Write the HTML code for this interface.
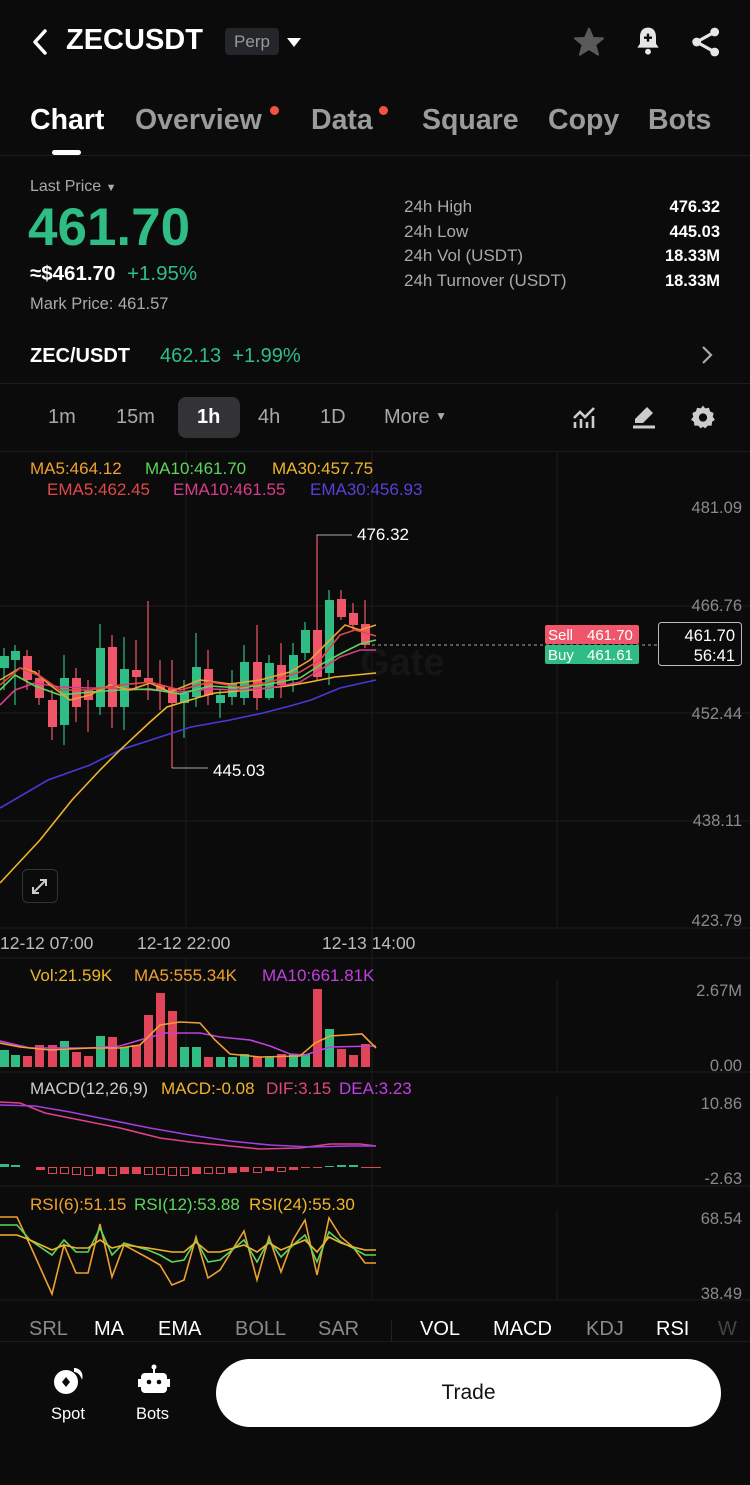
<!DOCTYPE html>
<html><head><meta charset="utf-8">
<style>
*{margin:0;padding:0;box-sizing:border-box}
body{width:750px;height:1485px;background:#0b0b0b;color:#fff;font-family:"Liberation Sans",sans-serif;position:relative;overflow:hidden}
.a{position:absolute;white-space:nowrap}
.g{color:#2fbd85}
.gr{color:#8a8a8a}
</style></head><body>
<!-- header -->
<svg class="a" style="left:30px;top:28px" width="20" height="28" viewBox="0 0 20 28"><path d="M15 3 L5 14 L15 25" stroke="#fff" stroke-width="3.5" fill="none" stroke-linecap="round" stroke-linejoin="round"/></svg>
<div class="a" style="left:66px;top:24px;font-size:29px;font-weight:bold">ZECUSDT</div>
<div class="a" style="left:225px;top:28px;width:54px;height:27px;background:#25262a;border-radius:4px;color:#9a9a9a;font-size:17px;line-height:27px;text-align:center">Perp</div>
<svg class="a" style="left:286px;top:36px" width="16" height="12"><path d="M1 2 L15 2 L8 11Z" fill="#fff"/></svg>
<svg class="a" style="left:572px;top:26px" width="34" height="32" viewBox="0 0 24 24"><path d="M12 2 L15 9 L22.5 9.3 L16.7 14 L18.8 21.5 L12 17.2 L5.2 21.5 L7.3 14 L1.5 9.3 L9 9Z" fill="#5a5a5d" stroke="#5a5a5d" stroke-linejoin="round" stroke-width="1.5"/></svg>
<svg class="a" style="left:632px;top:25px" width="32" height="32" viewBox="0 0 24 24"><path d="M12 2 C7.5 2 6 5.5 6 9 L6 14 L4 17 L20 17 L18 14 L18 9 C18 5.5 16.5 2 12 2Z" fill="#e6e6e6"/><circle cx="12" cy="20" r="2.2" fill="#e6e6e6"/><path d="M12 6.5 V12.5 M9 9.5 H15" stroke="#0b0b0b" stroke-width="1.8"/></svg>
<svg class="a" style="left:690px;top:26px" width="32" height="32" viewBox="0 0 24 24"><circle cx="18.5" cy="4.5" r="3.3" fill="#e6e6e6"/><circle cx="18.5" cy="19.5" r="3.3" fill="#e6e6e6"/><circle cx="5" cy="12" r="3.3" fill="#e6e6e6"/><path d="M18.5 4.5 L5 12 L18.5 19.5" stroke="#e6e6e6" stroke-width="2.4" fill="none"/></svg>
<!-- tabs -->
<div class="a" style="left:30px;top:104px;font-size:28.5px;font-weight:bold">Chart</div>
<div class="a" style="left:52px;top:150px;width:29px;height:5px;border-radius:3px;background:#fff"></div>
<div class="a" style="left:135px;top:104px;font-size:28.5px;font-weight:bold;color:#9b9b9b">Overview</div>
<div class="a" style="left:270px;top:106px;width:9px;height:9px;border-radius:5px;background:#f0533e"></div>
<div class="a" style="left:311px;top:104px;font-size:28.5px;font-weight:bold;color:#9b9b9b">Data</div>
<div class="a" style="left:379px;top:106px;width:9px;height:9px;border-radius:5px;background:#f0533e"></div>
<div class="a" style="left:422px;top:104px;font-size:28.5px;font-weight:bold;color:#9b9b9b">Square</div>
<div class="a" style="left:548px;top:104px;font-size:28.5px;font-weight:bold;color:#9b9b9b">Copy</div>
<div class="a" style="left:648px;top:104px;font-size:28.5px;font-weight:bold;color:#9b9b9b">Bots</div>
<div class="a" style="left:0;top:155px;width:750px;height:1px;background:#1c1c1e"></div>
<!-- price -->
<div class="a" style="left:30px;top:178px;font-size:16px;color:#aaa">Last Price <span style="font-size:11px">▼</span></div>
<div class="a g" style="left:28px;top:197px;font-size:53px;font-weight:bold">461.70</div>
<div class="a" style="left:30px;top:262px;font-size:20.5px;font-weight:bold">≈$461.70 <span class="g" style="margin-left:6px;font-weight:normal">+1.95%</span></div>
<div class="a" style="left:30px;top:295px;font-size:16.5px;color:#aaa">Mark Price: 461.57</div>
<div class="a" style="left:404px;top:195px;font-size:17px;color:#aaa;line-height:24.5px">24h High<br>24h Low<br>24h Vol (USDT)<br>24h Turnover (USDT)</div>
<div class="a" style="right:30px;top:195px;font-size:16.5px;line-height:24.5px;text-align:right;font-weight:bold">476.32<br>445.03<br>18.33M<br>18.33M</div>
<div class="a" style="left:30px;top:345px;font-size:20px;font-weight:bold">ZEC/USDT</div>
<div class="a g" style="left:160px;top:345px;font-size:20px">462.13 &nbsp;+1.99%</div>
<svg class="a" style="left:700px;top:345px" width="14" height="20"><path d="M3 2 L11 10 L3 18" stroke="#aaa" stroke-width="2.2" fill="none"/></svg>
<div class="a" style="left:0;top:383px;width:750px;height:1px;background:#1c1c1e"></div>
<!-- intervals -->
<div class="a" style="left:178px;top:397px;width:62px;height:41px;border-radius:8px;background:#333335"></div>
<div class="a" style="left:48px;top:406px;font-size:20px;color:#aaa">1m</div>
<div class="a" style="left:116px;top:406px;font-size:20px;color:#aaa">15m</div>
<div class="a" style="left:197px;top:406px;font-size:20px;font-weight:bold">1h</div>
<div class="a" style="left:258px;top:406px;font-size:20px;color:#aaa">4h</div>
<div class="a" style="left:320px;top:406px;font-size:20px;color:#aaa">1D</div>
<div class="a" style="left:384px;top:406px;font-size:20px;color:#aaa">More <span style="font-size:12px;vertical-align:3px">▼</span></div>
<svg class="a" style="left:572px;top:406px" width="26" height="24" viewBox="0 0 26 24"><path d="M2 12 L8 6 L13 11 L22 2" stroke="#ccc" stroke-width="2.6" fill="none"/><path d="M3 16V22M9 13V22M15 16V22M21 10V22" stroke="#ccc" stroke-width="2.6"/></svg>
<svg class="a" style="left:631px;top:405px" width="26" height="26" viewBox="0 0 26 26"><path d="M16 2 L22 8 L12 18 L4 18 L4 14Z" fill="#ccc"/><path d="M2 22H24" stroke="#ccc" stroke-width="3"/></svg>
<svg class="a" style="left:690px;top:404px" width="26" height="26" viewBox="0 0 24 24"><path d="M12 1.5 L14 4 L17.5 3.5 L18.5 6.8 L21.8 8.3 L21 11.8 L23 14.5 L20.3 16.5 L20 20 L16.5 20 L14 22.5 L12 21 L10 22.5 L7.5 20 L4 20 L3.7 16.5 L1 14.5 L3 11.8 L2.2 8.3 L5.5 6.8 L6.5 3.5 L10 4Z" fill="#ccc"/><circle cx="12" cy="12.5" r="3.8" fill="#0b0b0b"/></svg>
<div class="a" style="left:0;top:451px;width:750px;height:1px;background:#1c1c1e"></div>

<!-- chart svg -->
<svg class="a" style="left:0;top:0" width="750" height="1340" font-family="Liberation Sans, sans-serif">
<g stroke="#1d1d1f" stroke-width="1">
<line x1="186" y1="452" x2="186" y2="928"/><line x1="372" y1="452" x2="372" y2="1300"/><line x1="557" y1="452" x2="557" y2="928"/>
<line x1="186" y1="958" x2="186" y2="1072"/><line x1="557" y1="980" x2="557" y2="1072"/><line x1="557" y1="1095" x2="557" y2="1185"/><line x1="557" y1="1210" x2="557" y2="1300"/>
<line x1="0" y1="606" x2="750" y2="606"/><line x1="0" y1="713" x2="750" y2="713"/><line x1="0" y1="821" x2="750" y2="821"/><line x1="0" y1="928" x2="750" y2="928"/>
<line x1="0" y1="958" x2="750" y2="958"/><line x1="0" y1="1072" x2="750" y2="1072"/><line x1="0" y1="1186" x2="750" y2="1186"/><line x1="0" y1="1300" x2="750" y2="1300"/>
</g>
<text x="360" y="675" font-size="38" font-weight="bold" fill="#151515">Gate</text>
<g font-size="17">
<text x="30" y="474" fill="#f0a030">MA5:464.12</text><text x="145" y="474" fill="#5cd65c">MA10:461.70</text><text x="272" y="474" fill="#f0b429">MA30:457.75</text>
<text x="47" y="495" fill="#e04848">EMA5:462.45</text><text x="173" y="495" fill="#d83c8a">EMA10:461.55</text><text x="310" y="495" fill="#5a3fd8">EMA30:456.93</text>
</g>
<g font-size="16.5" fill="#8a8a8a" text-anchor="end">
<text x="742" y="513">481.09</text><text x="742" y="611">466.76</text><text x="742" y="719">452.44</text><text x="742" y="826">438.11</text><text x="742" y="926">423.79</text>
<text x="742" y="996">2.67M</text><text x="742" y="1071">0.00</text><text x="742" y="1109">10.86</text><text x="742" y="1184">-2.63</text><text x="742" y="1224">68.54</text><text x="742" y="1299">38.49</text>
</g>
<g font-size="17.5" fill="#bbb"><text x="0" y="949">12-12 07:00</text><text x="137" y="949">12-12 22:00</text><text x="322" y="949">12-13 14:00</text></g>
<!-- wicks -->
<g stroke-width="1.2">
<g stroke="#2fbd85"><line x1="4" y1="648" x2="4" y2="690"/><line x1="15" y1="645" x2="15" y2="705"/><line x1="64" y1="655" x2="64" y2="745"/><line x1="100" y1="624" x2="100" y2="715"/><line x1="124" y1="637" x2="124" y2="730"/><line x1="184" y1="680" x2="184" y2="738"/><line x1="196" y1="633" x2="196" y2="707"/><line x1="220" y1="690" x2="220" y2="718"/><line x1="232" y1="670" x2="232" y2="705"/><line x1="244" y1="645" x2="244" y2="705"/><line x1="269" y1="655" x2="269" y2="700"/><line x1="293" y1="643" x2="293" y2="692"/><line x1="305" y1="622" x2="305" y2="660"/><line x1="329" y1="590" x2="329" y2="685"/></g>
<g stroke="#f0566a"><line x1="27" y1="650" x2="27" y2="690"/><line x1="39" y1="670" x2="39" y2="705"/><line x1="52" y1="690" x2="52" y2="740"/><line x1="76" y1="668" x2="76" y2="722"/><line x1="88" y1="680" x2="88" y2="732"/><line x1="112" y1="635" x2="112" y2="728"/><line x1="136" y1="640" x2="136" y2="690"/><line x1="148" y1="601" x2="148" y2="700"/><line x1="160" y1="660" x2="160" y2="710"/><line x1="172" y1="660" x2="172" y2="768"/><line x1="208" y1="650" x2="208" y2="705"/><line x1="257" y1="625" x2="257" y2="710"/><line x1="281" y1="643" x2="281" y2="698"/><line x1="317" y1="535" x2="317" y2="680"/><line x1="341" y1="590" x2="341" y2="620"/><line x1="353" y1="603" x2="353" y2="630"/><line x1="365" y1="600" x2="365" y2="648"/></g>
</g>
<g fill="#2fbd85"><rect x="0" y="656" width="9" height="12"/><rect x="11" y="651" width="9" height="9"/><rect x="60" y="678" width="9" height="47"/><rect x="96" y="648" width="9" height="59"/><rect x="120" y="669" width="9" height="38"/><rect x="180" y="693" width="9" height="10"/><rect x="192" y="667" width="9" height="30"/><rect x="216" y="695" width="9" height="8"/><rect x="228" y="683" width="9" height="14"/><rect x="240" y="662" width="9" height="36"/><rect x="265" y="663" width="9" height="35"/><rect x="289" y="655" width="9" height="25"/><rect x="301" y="630" width="9" height="23"/><rect x="325" y="600" width="9" height="73"/></g>
<g fill="#f0566a"><rect x="23" y="656" width="9" height="24"/><rect x="35" y="678" width="9" height="20"/><rect x="48" y="700" width="9" height="27"/><rect x="72" y="678" width="9" height="29"/><rect x="84" y="690" width="9" height="10"/><rect x="108" y="647" width="9" height="60"/><rect x="132" y="670" width="9" height="7"/><rect x="144" y="678" width="9" height="5"/><rect x="156" y="685" width="9" height="5"/><rect x="168" y="688" width="9" height="15"/><rect x="204" y="669" width="9" height="26"/><rect x="253" y="662" width="9" height="36"/><rect x="277" y="665" width="9" height="20"/><rect x="313" y="630" width="9" height="47"/><rect x="337" y="599" width="9" height="18"/><rect x="349" y="613" width="9" height="12"/><rect x="361" y="624" width="9" height="21"/></g>
<g fill="none" stroke-width="1.6">
<polyline stroke="#4a38d8" points="0,808 48,780 90,765 120,750 160,737 191,727 230,720 263,713 290,706 311,700 340,688 376,680"/>
<polyline stroke="#f0b429" points="0,883 40,840 72,800 100,770 120,750 150,722 167,707 200,697 215,693 250,690 287,686 310,682 335,677 376,673"/>
<polyline stroke="#d83c8a" points="0,705 15,690 35,683 60,687 90,688 120,688 150,690 180,692 210,689 240,690 270,688 300,682 320,670 340,657 360,650 376,650"/>
<polyline stroke="#5cd65c" points="0,690 15,675 35,686 60,695 90,692 120,690 150,689 180,694 210,686 240,688 270,684 300,678 320,665 340,654 360,644 376,640"/>
<polyline stroke="#f0a030" points="0,680 20,668 35,672 50,685 70,700 90,695 110,685 130,690 150,683 170,692 200,680 230,684 260,680 290,672 310,660 330,640 345,625 360,630 376,625"/>
<polyline stroke="#e04848" points="0,685 20,668 40,676 60,690 90,690 120,685 150,682 180,690 210,682 240,687 270,682 300,672 320,660 340,635 355,630 376,636"/>
</g>
<line x1="372" y1="645" x2="660" y2="645" stroke="#aaa" stroke-width="1" stroke-dasharray="3,3"/>
<polyline points="317,536 317,535 352,535" fill="none" stroke="#aaa" stroke-width="1"/>
<text x="357" y="540" font-size="17" fill="#fff">476.32</text>
<polyline points="172,768 208,768" fill="none" stroke="#aaa" stroke-width="1"/>
<text x="213" y="776" font-size="17" fill="#fff">445.03</text>
<rect x="545" y="625" width="94" height="19" rx="2" fill="#f0566a"/><text x="548" y="640" font-size="15" fill="#fff">Sell</text><text x="587" y="640" font-size="15" fill="#fff">461.70</text>
<rect x="545" y="645" width="94" height="19" rx="2" fill="#2fbd85"/><text x="548" y="660" font-size="15" fill="#fff">Buy</text><text x="587" y="660" font-size="15" fill="#fff">461.61</text>
<rect x="658.5" y="622.5" width="83" height="43" rx="3" fill="#0b0b0b" stroke="#bbb"/>
<text x="735" y="641" font-size="16.5" fill="#fff" text-anchor="end">461.70</text><text x="735" y="661" font-size="16.5" fill="#fff" text-anchor="end">56:41</text>
<rect x="22.5" y="869.5" width="35" height="33" rx="5" fill="none" stroke="#333"/>
<path d="M33 893 L46 880 M40 880 H46 V886 M33 887 V893 H39" stroke="#ccc" stroke-width="2" fill="none"/>
<!-- vol -->
<g font-size="17"><text x="30" y="981" fill="#f0b429">Vol:21.59K</text><text x="134" y="981" fill="#f0a030">MA5:555.34K</text><text x="262" y="981" fill="#c040e0">MA10:661.81K</text></g>
<g>
<rect x="0" y="1050" width="9" height="17" fill="#2fbd85"/><rect x="11" y="1055" width="9" height="12" fill="#2fbd85"/><rect x="23" y="1056" width="9" height="11" fill="#e0455a"/><rect x="35" y="1045" width="9" height="22" fill="#e0455a"/><rect x="48" y="1045" width="9" height="22" fill="#e0455a"/><rect x="60" y="1041" width="9" height="26" fill="#2fbd85"/><rect x="72" y="1052" width="9" height="15" fill="#e0455a"/><rect x="84" y="1056" width="9" height="11" fill="#e0455a"/><rect x="96" y="1036" width="9" height="31" fill="#2fbd85"/><rect x="108" y="1037" width="9" height="30" fill="#e0455a"/><rect x="120" y="1047" width="9" height="20" fill="#2fbd85"/><rect x="132" y="1045" width="9" height="22" fill="#e0455a"/><rect x="144" y="1015" width="9" height="52" fill="#e0455a"/><rect x="156" y="993" width="9" height="74" fill="#e0455a"/><rect x="168" y="1011" width="9" height="56" fill="#e0455a"/><rect x="180" y="1047" width="9" height="20" fill="#2fbd85"/><rect x="192" y="1047" width="9" height="20" fill="#2fbd85"/><rect x="204" y="1057" width="9" height="10" fill="#e0455a"/><rect x="216" y="1057" width="9" height="10" fill="#2fbd85"/><rect x="228" y="1057" width="9" height="10" fill="#2fbd85"/><rect x="240" y="1054" width="9" height="13" fill="#2fbd85"/><rect x="253" y="1057" width="9" height="10" fill="#e0455a"/><rect x="265" y="1057" width="9" height="10" fill="#2fbd85"/><rect x="277" y="1054" width="9" height="13" fill="#e0455a"/><rect x="289" y="1054" width="9" height="13" fill="#2fbd85"/><rect x="301" y="1054" width="9" height="13" fill="#2fbd85"/><rect x="313" y="989" width="9" height="78" fill="#e0455a"/><rect x="325" y="1029" width="9" height="38" fill="#2fbd85"/><rect x="337" y="1049" width="9" height="18" fill="#e0455a"/><rect x="349" y="1055" width="9" height="12" fill="#e0455a"/><rect x="361" y="1044" width="9" height="23" fill="#e0455a"/>
</g>
<g fill="none" stroke-width="1.6">
<polyline stroke="#c040e0" points="0,1041 30,1048 60,1048 90,1048 120,1046 140,1040 165,1033 200,1033 220,1037 250,1040 270,1046 290,1054 305,1055 330,1047 376,1046"/>
<polyline stroke="#f0a030" points="0,1043 20,1047 50,1050 90,1048 120,1048 140,1045 160,1025 180,1022 200,1023 215,1040 230,1054 260,1057 300,1056 315,1043 330,1036 362,1034 376,1048"/>
</g>
<!-- macd -->
<g font-size="17"><text x="30" y="1094" fill="#ccc">MACD(12,26,9)</text><text x="161" y="1094" fill="#f0b429">MACD:-0.08</text><text x="266" y="1094" fill="#e04878">DIF:3.15</text><text x="339" y="1094" fill="#c040e0">DEA:3.23</text></g>
<g fill="none" stroke-width="1.6">
<polyline stroke="#e0408a" points="0,1102 20,1103 45,1113 80,1120 120,1128 160,1138 190,1142 230,1146 260,1149 300,1148 330,1144 360,1144 376,1146"/>
<polyline stroke="#a040e0" points="0,1105 35,1106 70,1112 110,1120 150,1128 190,1135 230,1141 270,1145 310,1147 350,1146 376,1146"/>
</g>
<g stroke-width="1"><rect x="0" y="1164" width="9" height="3" fill="#2fbd85"/><rect x="11" y="1165" width="9" height="2" fill="#2fbd85"/>
<g fill="none" stroke="#e0455a"><rect x="48.5" y="1167.5" width="8" height="6"/><rect x="60.5" y="1167.5" width="8" height="6"/><rect x="72.5" y="1167.5" width="8" height="7"/><rect x="84.5" y="1167.5" width="8" height="8"/><rect x="108.5" y="1167.5" width="8" height="8"/><rect x="144.5" y="1167.5" width="8" height="7"/><rect x="156.5" y="1167.5" width="8" height="7"/><rect x="168.5" y="1167.5" width="8" height="8"/><rect x="180.5" y="1167.5" width="8" height="8"/><rect x="204.5" y="1167.5" width="8" height="6"/><rect x="216.5" y="1167.5" width="8" height="6"/><rect x="253.5" y="1167.5" width="8" height="5"/><rect x="277.5" y="1167.5" width="8" height="4"/></g>
<g fill="#e0455a"><rect x="36" y="1167" width="9" height="3"/><rect x="96" y="1167" width="9" height="7"/><rect x="120" y="1167" width="9" height="7"/><rect x="132" y="1167" width="9" height="7"/><rect x="192" y="1167" width="9" height="7"/><rect x="228" y="1167" width="9" height="6"/><rect x="240" y="1167" width="9" height="5"/><rect x="265" y="1167" width="9" height="4"/><rect x="289" y="1167" width="9" height="3"/><rect x="301" y="1167" width="9" height="1"/><rect x="313" y="1167" width="9" height="1"/><rect x="361" y="1167" width="20" height="1"/></g>
<g fill="#2fbd85"><rect x="325" y="1166" width="9" height="1"/><rect x="337" y="1165" width="9" height="2"/><rect x="349" y="1165" width="9" height="2"/></g></g>
<!-- rsi -->
<g font-size="17"><text x="30" y="1210" fill="#f0a030">RSI(6):51.15</text><text x="134" y="1210" fill="#5cd65c">RSI(12):53.88</text><text x="249" y="1210" fill="#f0b429">RSI(24):55.30</text></g>
<g fill="none" stroke-width="1.6">
<polyline stroke="#f0a030" points="0,1217 17,1217 30,1245 52,1294 64,1245 76,1273 88,1273 100,1224 112,1277 124,1245 148,1258 160,1265 172,1285 184,1280 196,1237 208,1278 220,1270 244,1231 257,1280 269,1237 281,1272 293,1240 305,1220 317,1275 329,1218 341,1237 353,1247 365,1263 376,1263"/>
<polyline stroke="#5cd65c" points="0,1225 17,1225 30,1240 52,1255 64,1240 76,1252 88,1252 100,1228 112,1255 124,1243 148,1250 160,1255 172,1262 184,1260 196,1240 208,1262 220,1260 244,1240 257,1262 269,1240 281,1257 293,1245 305,1235 317,1262 329,1232 341,1242 353,1248 365,1255 376,1255"/>
<polyline stroke="#f0b429" points="0,1235 17,1235 30,1240 52,1250 64,1245 76,1248 88,1248 100,1240 112,1248 124,1245 148,1248 160,1250 172,1252 184,1252 196,1242 208,1252 220,1252 244,1245 257,1252 269,1243 281,1250 293,1245 305,1240 317,1252 329,1237 341,1243 353,1247 365,1250 376,1250"/>
</g>
</svg>
<!-- indicator tabs -->
<div class="a" style="left:0;top:1318px;font-size:20px;width:750px">
<span class="a" style="left:29px;color:#8a8a8a">SRL</span><span class="a" style="left:94px">MA</span><span class="a" style="left:158px">EMA</span><span class="a" style="left:235px;color:#8a8a8a">BOLL</span><span class="a" style="left:318px;color:#8a8a8a">SAR</span><span class="a" style="left:420px">VOL</span><span class="a" style="left:493px">MACD</span><span class="a" style="left:586px;color:#8a8a8a">KDJ</span><span class="a" style="left:656px">RSI</span><span class="a" style="left:718px;color:#444">W</span></div>
<div class="a" style="left:391px;top:1320px;width:1px;height:22px;background:#222"></div>
<div class="a" style="left:0;top:1341px;width:750px;height:1px;background:#1c1c1e"></div>
<!-- bottom -->
<svg class="a" style="left:52px;top:1364px" width="34" height="32" viewBox="0 0 34 32"><circle cx="14" cy="18" r="12" fill="#fff"/><path d="M14 13 L18 18 L14 23 L10 18Z" fill="#0b0b0b"/><path d="M22 4 C28 4 32 9 30 16 C29 12 26 8 22 8Z" fill="#fff"/></svg>
<div class="a" style="left:51px;top:1405px;font-size:16.5px">Spot</div>
<svg class="a" style="left:137px;top:1364px" width="34" height="32" viewBox="0 0 34 32"><circle cx="17" cy="3" r="2.5" fill="#fff"/><rect x="16" y="4" width="2" height="5" fill="#fff"/><rect x="4" y="9" width="26" height="20" rx="4" fill="#fff"/><rect x="1" y="15" width="3" height="8" fill="#fff"/><rect x="30" y="15" width="3" height="8" fill="#fff"/><circle cx="12" cy="18" r="2.3" fill="#0b0b0b"/><circle cx="22" cy="18" r="2.3" fill="#0b0b0b"/></svg>
<div class="a" style="left:136px;top:1405px;font-size:16.5px">Bots</div>
<div class="a" style="left:216px;top:1359px;width:505px;height:68px;border-radius:34px;background:#fff;color:#111;font-size:21px;text-align:center;line-height:68px">Trade</div>
</body></html>
